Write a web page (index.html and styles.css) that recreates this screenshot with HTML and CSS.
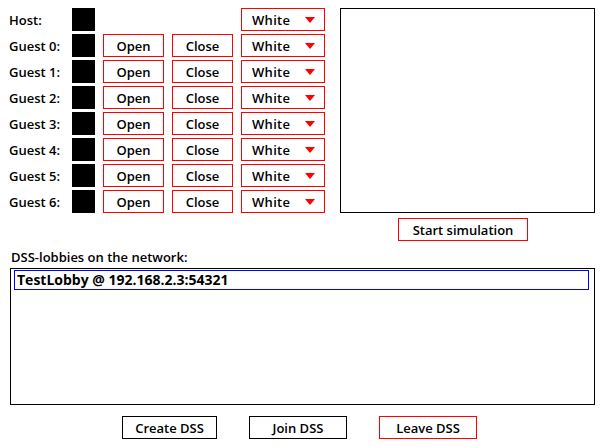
FILE: index.html
```html
<!DOCTYPE html>
<html>
<head>
<meta charset="utf-8">
<link rel="stylesheet" href="styles.css">
</head>
<body>
<div class="app">
  <div class="top">
    <div class="players">
      <div class="label">Host:</div><div class="swatch"></div><div></div><div></div>
      <div class="select"><span>White</span><i class="arrow"></i></div>

      <div class="label">Guest 0:</div><div class="swatch"></div><div class="btn red">Open</div><div class="btn red">Close</div>
      <div class="select"><span>White</span><i class="arrow"></i></div>

      <div class="label">Guest 1:</div><div class="swatch"></div><div class="btn red">Open</div><div class="btn red">Close</div>
      <div class="select"><span>White</span><i class="arrow"></i></div>

      <div class="label">Guest 2:</div><div class="swatch"></div><div class="btn red">Open</div><div class="btn red">Close</div>
      <div class="select"><span>White</span><i class="arrow"></i></div>

      <div class="label">Guest 3:</div><div class="swatch"></div><div class="btn red">Open</div><div class="btn red">Close</div>
      <div class="select"><span>White</span><i class="arrow"></i></div>

      <div class="label">Guest 4:</div><div class="swatch"></div><div class="btn red">Open</div><div class="btn red">Close</div>
      <div class="select"><span>White</span><i class="arrow"></i></div>

      <div class="label">Guest 5:</div><div class="swatch"></div><div class="btn red">Open</div><div class="btn red">Close</div>
      <div class="select"><span>White</span><i class="arrow"></i></div>

      <div class="label">Guest 6:</div><div class="swatch"></div><div class="btn red">Open</div><div class="btn red">Close</div>
      <div class="select"><span>White</span><i class="arrow"></i></div>
    </div>
    <div class="sim">
      <div class="canvas"></div>
      <div class="btn red start">Start simulation</div>
    </div>
  </div>
  <div class="lobbies-label">DSS-lobbies on the network:</div>
  <div class="list">
    <div class="item">TestLobby @ 192.168.2.3:54321</div>
  </div>
  <div class="actions">
    <div class="btn black create">Create DSS</div>
    <div class="btn black join">Join DSS</div>
    <div class="btn red leave">Leave DSS</div>
  </div>
</div>
</body>
</html>
```

FILE: styles.css
```css
html, body {
  margin: 0;
  padding: 0;
  background: #ffffff;
}
body {
  font-family: "Open Sans", "Noto Sans", sans-serif;
  font-size: 13px;
  color: #000;
  width: 604px;
  height: 447px;
  overflow: hidden;
}
.app {
  padding: 8px 0 0 0;
}
.top {
  display: flex;
  align-items: flex-start;
}
.players {
  display: grid;
  grid-template-columns: 55px 23px 61px 61px 84px;
  grid-auto-rows: 23px;
  column-gap: 8px;
  row-gap: 3px;
  padding-left: 9px;
}
.label {
  display: flex;
  align-items: center;
  white-space: nowrap;
  font-weight: 600;
}
.swatch {
  background: #000;
}
.btn {
  box-sizing: border-box;
  display: flex;
  align-items: center;
  justify-content: center;
  height: 23px;
  background: #fff;
  white-space: nowrap;
  font-weight: 600;
}
.red { border: 1px solid #ff0000; }
.black { border: 1px solid #000; }
.select {
  box-sizing: border-box;
  border: 1px solid #ff0000;
  display: flex;
  align-items: center;
  padding-left: 10px;
  font-weight: 600;
}
.select span { flex: 1; letter-spacing: 0.3px; }
.arrow {
  display: block;
  width: 0;
  height: 0;
  border-left: 5.5px solid transparent;
  border-right: 5.5px solid transparent;
  border-top: 6px solid #ff0000;
  margin-right: 9px;
  margin-top: 1px;
}
.sim {
  margin-left: 15px;
  display: flex;
  flex-direction: column;
}
.canvas {
  box-sizing: border-box;
  width: 255px;
  height: 205px;
  border: 1px solid #000;
}
.start {
  width: 130px;
  margin-top: 5px;
  margin-left: 58px;
}
.lobbies-label {
  margin: 8px 0 0 11px;
  height: 17px;
  line-height: 17px;
  font-weight: 600;
}
.list {
  box-sizing: border-box;
  margin: 2px 0 0 10px;
  width: 585px;
  height: 137px;
  border: 1px solid #000;
  padding: 1px 5px 0 3px;
}
.item {
  box-sizing: border-box;
  height: 20px;
  border: 1px solid #0000ff;
  padding-left: 2px;
  line-height: 18px;
  font-size: 14px;
  font-weight: 700;
}
.actions {
  display: flex;
  margin: 11px 0 0 122px;
}
.create { width: 95px; }
.join { width: 98px; margin-left: 32px; }
.leave { width: 98px; margin-left: 32px; }
```
